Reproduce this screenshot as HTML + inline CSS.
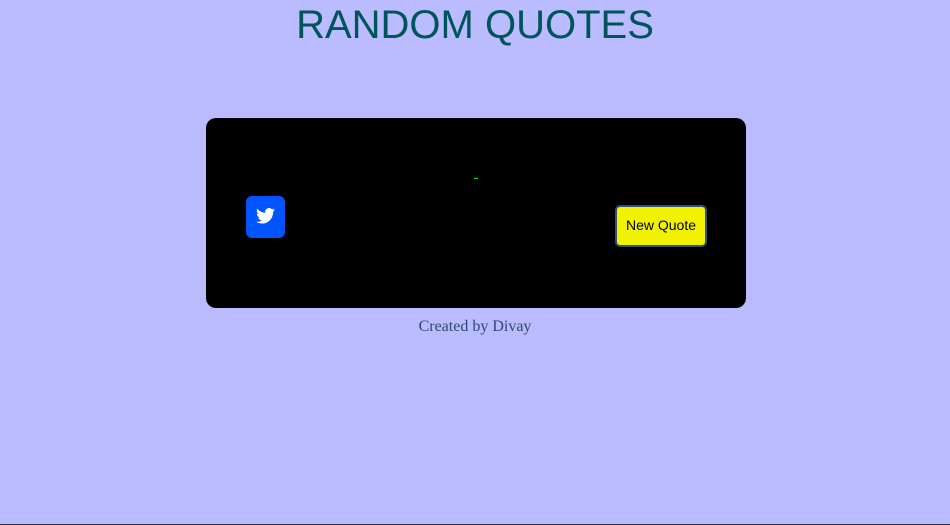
<!DOCTYPE html>
<html><head><style>
html,body{margin:0;padding:0}
body{width:950px;height:525px;background:#bbbbff;position:relative;overflow:hidden;font-family:"Liberation Sans",sans-serif}
h1{position:absolute;top:1px;left:0;width:950px;margin:0;text-align:center;font-weight:normal;font-size:40px;line-height:48px;color:#00555a;letter-spacing:0px}
.card{position:absolute;left:206px;top:118px;width:540px;height:190px;background:#000;border-radius:10px}
.dash{position:absolute;left:474px;top:178px;width:4px;height:1px;background:#00ff00}
.tw{position:absolute;left:246px;top:196px;width:39px;height:42px;background:#0055ff;border-radius:6px}
.tw svg{position:absolute;left:10px;top:12px}
.btn{position:absolute;left:615px;top:205px;width:88px;height:38px;background:#f2f200;border:2px solid #2d4f7a;border-radius:5px;box-sizing:content-box;font-size:14px;line-height:37px;text-align:center;color:#000}
.foot{position:absolute;top:318px;left:0;width:950px;text-align:center;font-family:"Liberation Serif",serif;font-size:16px;color:#2c4a6e}
.line{position:absolute;left:0;top:524px;width:950px;height:1px;background:#333}
</style></head><body>
<h1>RANDOM QUOTES</h1>
<div class="card"></div>
<div class="dash"></div>
<div class="tw"><svg width="19" height="16" viewBox="0 0 24 20"><path fill="#fff" d="M24 2.4a9.8 9.8 0 0 1-2.8.8A4.9 4.9 0 0 0 23.3.4a9.9 9.9 0 0 1-3.1 1.2A4.9 4.9 0 0 0 11.8 6 14 14 0 0 1 1.7.9a4.9 4.9 0 0 0 1.5 6.6A4.9 4.9 0 0 1 1 6.9v.1a4.9 4.9 0 0 0 3.9 4.8 4.9 4.9 0 0 1-2.2.1 4.9 4.9 0 0 0 4.6 3.4A9.9 9.9 0 0 1 0 17.300 14 14 0 0 0 7.5 19.5c9.1 0 14-7.5 14-14v-.6A10 10 0 0 0 24 2.4z"/></svg></div>
<div class="btn">New Quote</div>
<div class="foot">Created by Divay</div>
<div class="line"></div>
</body></html>
